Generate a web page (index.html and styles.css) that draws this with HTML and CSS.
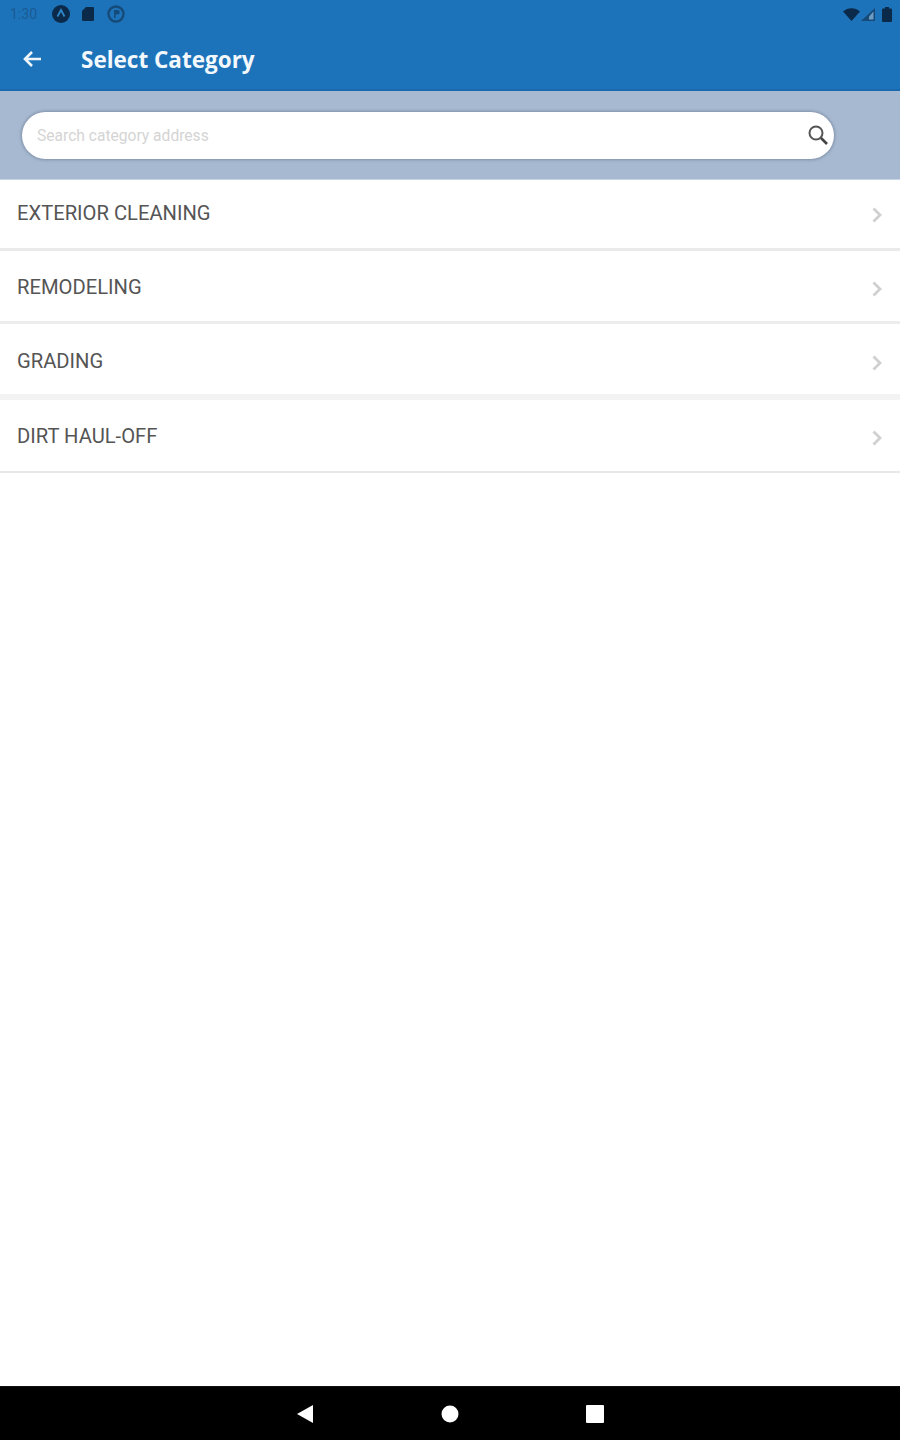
FILE: index.html
```html
<!DOCTYPE html>
<html lang="en">
<head>
<meta charset="utf-8">
<title>Select Category</title>
<link rel="stylesheet" href="styles.css">
</head>
<body>
<div class="screen">
  <header class="appbar">
    <div class="status">
      <div class="status-left">
        <span class="time">1:30</span>
        <svg class="st-icon" width="18" height="18" viewBox="0 0 18 18"><circle cx="9" cy="9" r="9" fill="#0b2a4a"/><path d="M5.500 11.500 9 5l3.500 6.500" fill="none" stroke="#2f86c9" stroke-width="1.800"/></svg>
        <svg class="st-icon st-card" width="12" height="14" viewBox="0 0 12 14"><path d="M4 0h7a1 1 0 0 1 1 1v12a1 1 0 0 1-1 1H1a1 1 0 0 1-1-1V4z" fill="#0b2a4a"/></svg>
        <svg class="st-icon" width="18" height="18" viewBox="0 0 18 18"><circle cx="9" cy="9" r="7.500" fill="none" stroke="#164a78" stroke-width="2.400"/><path d="M7 5h3.500a2.200 2.200 0 0 1 0 4.500H8.500V13H7z" fill="#164a78"/></svg>
      </div>
      <div class="status-right">
        <svg width="17" height="13" viewBox="0 0 17 13"><path d="M0 3.500C4.500-1 12.500-1 17 3.500L8.500 13z" fill="#0b2a4a"/></svg>
        <svg width="14" height="13" viewBox="0 0 14 13"><path d="M14 0v13H0z" fill="#164a78"/><path d="M12.500 3.500v8H8v-3z" fill="#6d9cc4"/></svg>
        <svg class="battery" width="10" height="15" viewBox="0 0 10 15"><path d="M3 0h4v1.500h2a1 1 0 0 1 1 1V14a1 1 0 0 1-1 1H1a1 1 0 0 1-1-1V2.500a1 1 0 0 1 1-1h2z" fill="#0b2a4a"/></svg>
      </div>
    </div>
    <div class="toolbar">
      <svg class="back" width="20" height="18" viewBox="0 0 20 18"><path d="M19 9H3M10 2 3 9l7 7" fill="none" stroke="#eef5fb" stroke-width="2.600"/></svg>
      <h1 class="title">Select Category</h1>
    </div>
  </header>
  <div class="search-band">
    <div class="search">
      <span class="placeholder">Search category address</span>
      <svg class="search-icon" width="22" height="22" viewBox="0 0 22 22"><circle cx="9" cy="9" r="6.500" fill="none" stroke="#555" stroke-width="2"/><path d="m14 14 6 6" stroke="#444" stroke-width="2.600"/></svg>
    </div>
  </div>
  <main class="list">
    <div class="row row-a"><span>EXTERIOR CLEANING</span><svg class="chev" width="10" height="16" viewBox="0 0 10 16"><path d="m1.500 1.500 6.500 6.500-6.500 6.500" fill="none" stroke="#d0d0d0" stroke-width="2.800"/></svg></div>
    <div class="row row-b"><span>REMODELING</span><svg class="chev" width="10" height="16" viewBox="0 0 10 16"><path d="m1.500 1.500 6.500 6.500-6.500 6.500" fill="none" stroke="#d0d0d0" stroke-width="2.800"/></svg></div>
    <div class="row row-c"><span>GRADING</span><svg class="chev" width="10" height="16" viewBox="0 0 10 16"><path d="m1.500 1.500 6.500 6.500-6.500 6.500" fill="none" stroke="#d0d0d0" stroke-width="2.800"/></svg></div>
    <div class="row row-d"><span>DIRT HAUL-OFF</span><svg class="chev" width="10" height="16" viewBox="0 0 10 16"><path d="m1.500 1.500 6.500 6.500-6.500 6.500" fill="none" stroke="#d0d0d0" stroke-width="2.800"/></svg></div>
  </main>
  <nav class="navbar">
    <svg width="18" height="20" viewBox="0 0 18 20"><path d="M17 1v18L1 10z" fill="#fff"/></svg>
    <svg width="18" height="18" viewBox="0 0 18 18"><circle cx="9" cy="9" r="8.500" fill="#fff"/></svg>
    <svg width="18" height="18" viewBox="0 0 18 18"><rect width="18" height="18" rx="1" fill="#fff"/></svg>
  </nav>
</div>
</body>
</html>
```
FILE: styles.css
```css
* { box-sizing: border-box; }
html, body { margin: 0; padding: 0; }
body { background: #fff; font-family: Roboto, "Liberation Sans", sans-serif; }
.screen { width: 900px; height: 1440px; display: flex; flex-direction: column; overflow: hidden; }

.appbar { height: 91px; background: #1d73ba; border-bottom: 2px solid #1869ad; flex: none; }
.status { height: 28px; padding: 0 8px 0 10px; display: flex; justify-content: space-between; align-items: center; }
.status-left { display: flex; align-items: center; gap: 9px; }
.status-right { display: flex; align-items: center; gap: 1px; }
.battery { margin-left: 6px; }
.time { font-size: 14px; color: #1a5a92; width: 33px; }
.st-card { margin: 0 4px 0 3px; }
.toolbar { height: 61px; padding: 0 0 0 22px; display: flex; align-items: center; }
.back { flex: none; }
.title { margin: 2px 0 0 39px; font-family: "Open Sans", sans-serif; font-size: 22.500px; font-weight: 700; color: #f2f8fc; }

.search-band { height: 89px; background: #a6b9d0; padding: 21px 0 0 22px; flex: none; border-bottom: 1px solid #c6d6e6; }
.search { width: 812px; height: 47px; background: #fff; border-radius: 24px; box-shadow: 0 0 3px 1px #8091a8; padding: 0 5px 0 15px; display: flex; align-items: center; justify-content: space-between; }
.search-icon { margin-bottom: 2px; }
.placeholder { font-size: 15.600px; color: #d4d4d4; }

.list { flex: 1; }
.row { display: flex; align-items: center; justify-content: space-between; padding: 0 18px 0 17px; font-size: 20.200px; color: #555; }
.row-a { height: 71px; border-bottom: 3px solid #eaeaea; padding-bottom: 2px; }
.row-b { height: 73px; border-bottom: 3px solid #ededed; padding-top: 2px; }
.row-c { height: 76px; border-bottom: 6px solid #f3f3f3; padding-top: 4px; }
.row-d { height: 73px; border-bottom: 2px solid #e8e8e8; }
.chev { margin-top: 4px; }

.navbar { height: 54px; background: #000; flex: none; border-top: 1px solid #111; display: flex; align-items: center; justify-content: center; gap: 127px; }
```
